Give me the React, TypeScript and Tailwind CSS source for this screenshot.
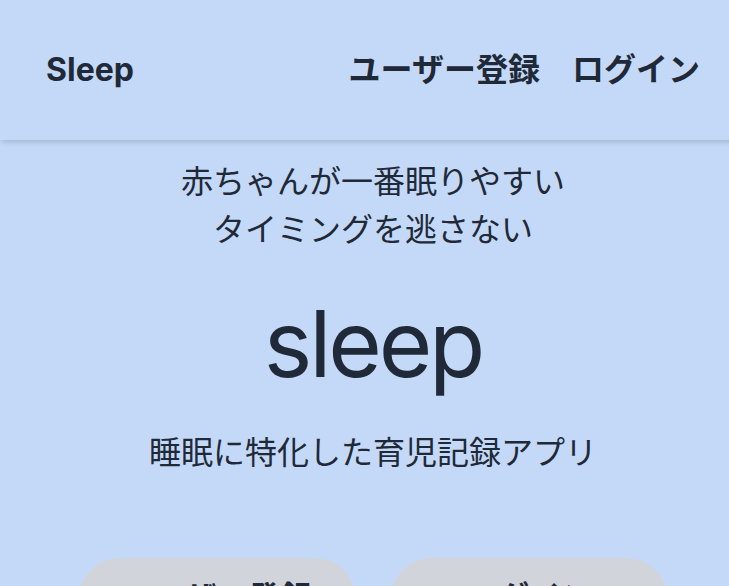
import React from 'react';

const jp = "font-['Inter','Noto_Sans_CJK_JP',sans-serif]";

const App: React.FC = () => {
  return (
    <div className={`h-[586px] w-full overflow-hidden bg-[#c4d9f8] text-[#1f2937] ${jp}`}>
      <div className="w-[746px]">
        <header className="flex h-[140px] items-center justify-between px-[46px] shadow-md">
          <span className="text-[32px] font-bold">Sleep</span>
          <nav className="flex items-center gap-[32px] text-[32px] font-bold">
            <a>ユーザー登録</a>
            <a>ログイン</a>
          </nav>
        </header>

        <main className="flex flex-col items-center pt-[18px]">
          <p className="text-center text-[32px] leading-[48px]">
            赤ちゃんが一番眠りやすい
            <br />
            タイミングを逃さない
          </p>
          <h1 className="mt-[44px] text-[92px] leading-none tracking-[-0.035em]">sleep</h1>
          <p className="mt-[39px] text-[32px] leading-[48px]">睡眠に特化した育児記録アプリ</p>

          <div className="mt-[81px] flex gap-[36px]">
            <button className="h-[80px] w-[276px] rounded-full bg-[#d1d5db] text-[32px] font-bold">
              ユーザー登録
            </button>
            <button className="h-[80px] w-[276px] rounded-full bg-[#d1d5db] text-[32px] font-bold">
              ログイン
            </button>
          </div>
        </main>
      </div>
    </div>
  );
};

export default App;
